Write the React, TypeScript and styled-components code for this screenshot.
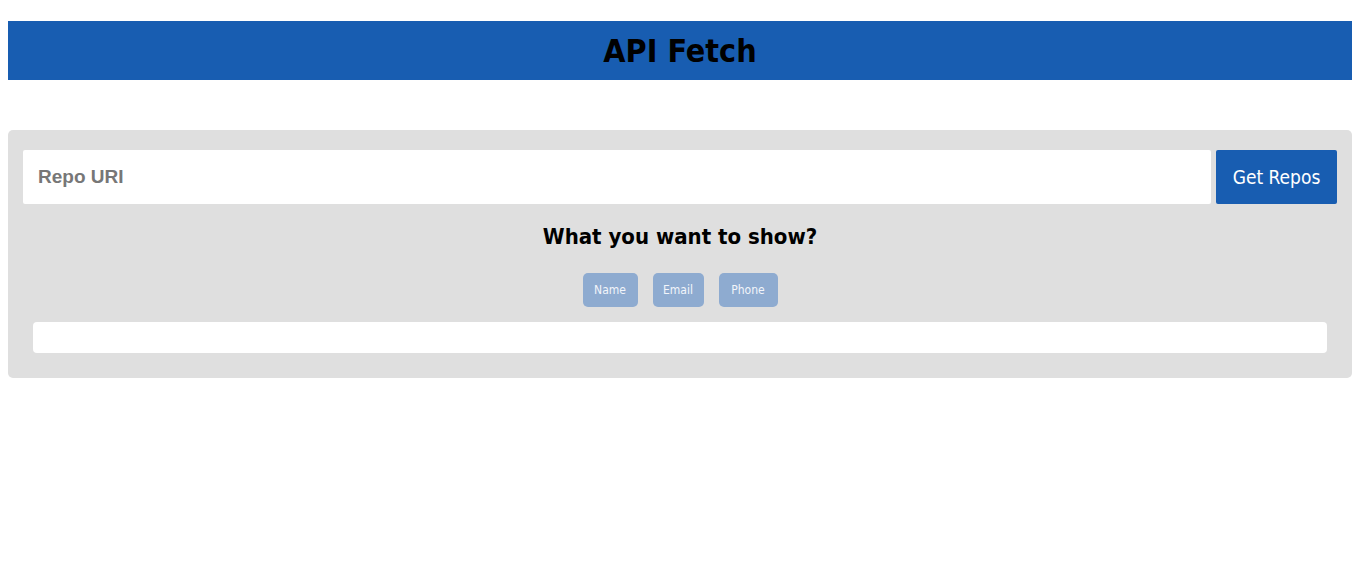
import React from "react";
import styled, { createGlobalStyle } from "styled-components";

const Global = createGlobalStyle`
  body { margin: 8px 7px 8px 8px; font-family: "DejaVu Sans Condensed", "DejaVu Sans", sans-serif; background: #fff; }
`;

const Header = styled.header`
  margin-top: 13px;
  height: 59px;
  background: #185db1;
  display: flex;
  align-items: center;
  justify-content: center;
`;

const Title = styled.h1`
  margin: 0;
  font-family: "DejaVu Sans Condensed", "DejaVu Sans", sans-serif;
  font-weight: bold;
  font-size: 32px;
  color: #000;
`;

const Panel = styled.main`
  margin-top: 50px;
  background: #dfdfdf;
  border-radius: 5px;
  padding: 20px 15px 25px;
  display: flex;
  flex-direction: column;
`;

const SearchRow = styled.div`
  display: flex;
  gap: 5px;
  height: 54px;
`;

const Input = styled.input`
  flex: 1;
  border: none;
  border-radius: 2px;
  background: #fff;
  padding: 0 15px;
  font-family: "Liberation Sans", Arial, sans-serif;
  font-weight: bold;
  font-size: 19px;
  outline: none;
  &::placeholder { color: #777; }
`;

const PrimaryButton = styled.button`
  width: 121px;
  border: none;
  border-radius: 2px;
  background: #185db1;
  color: #fff;
  font-family: "DejaVu Sans Condensed", "DejaVu Sans", sans-serif;
  font-size: 19px;
  padding: 0;
`;

const Question = styled.h3`
  margin: 20px 0 0;
  text-align: center;
  font-family: "DejaVu Sans Condensed", "DejaVu Sans", sans-serif;
  font-weight: bold;
  font-size: 22px;
  line-height: 26px;
  color: #000;
`;

const ChipRow = styled.div`
  display: flex;
  justify-content: center;
  gap: 15px;
  margin-top: 23px;
`;

const Chip = styled.button<{ $w: number }>`
  width: ${(p) => p.$w}px;
  height: 34px;
  border: none;
  border-radius: 5px;
  background: #8eabd0;
  color: #f2f5fa;
  font-family: "DejaVu Sans Condensed", "DejaVu Sans", sans-serif;
  font-size: 12px;
  padding: 0;
`;

const Result = styled.div`
  margin: 15px 10px 0;
  height: 31px;
  background: #fff;
  border-radius: 4px;
`;

export default function App() {
  return (
    <>
      <Global />
      <Header>
        <Title>API Fetch</Title>
      </Header>
      <Panel>
        <SearchRow>
          <Input placeholder="Repo URI" />
          <PrimaryButton>Get Repos</PrimaryButton>
        </SearchRow>
        <Question>What you want to show?</Question>
        <ChipRow>
          <Chip $w={55}>Name</Chip>
          <Chip $w={51}>Email</Chip>
          <Chip $w={59}>Phone</Chip>
        </ChipRow>
        <Result />
      </Panel>
    </>
  );
}
